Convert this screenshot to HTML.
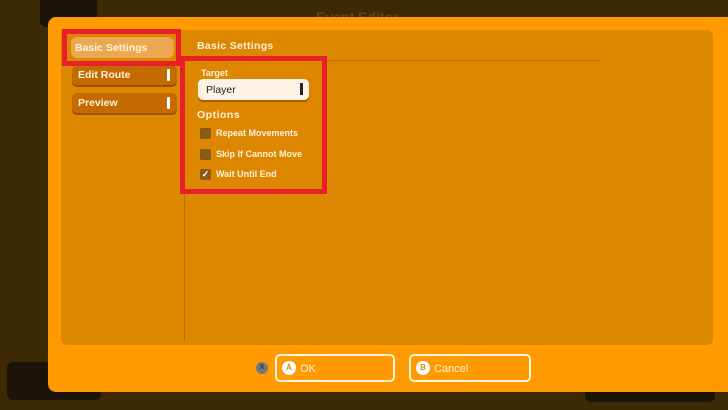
<!DOCTYPE html>
<html><head><style>
*{margin:0;padding:0;box-sizing:border-box}
body{width:728px;height:410px;background:#3d2903;position:relative;overflow:hidden;font-family:"Liberation Sans",sans-serif;font-weight:bold;color:#fff3dc}
.a{position:absolute}
.tab{position:absolute;left:72px;width:105px;height:20px;border-radius:5px;background:#c46a00;box-shadow:0 2px 0 #9a5200;font-size:10.5px;padding:4px 0 0 6px}
.tab i{position:absolute;right:7px;top:4px;width:3px;height:12px;background:#fff;border-radius:1px}
.cb{position:absolute;left:200px;width:11px;height:11px;border-radius:2px;background:#8a5a1a}
.lbl{position:absolute;left:216px;font-size:9px;letter-spacing:0}
.btn{position:absolute;top:354px;height:28px;border:2px solid #fff3dc;border-radius:5px;font-size:11px;padding:7px 0 0 23px;font-weight:normal}
.btn b{position:absolute;left:5px;top:5px;width:14px;height:14px;border-radius:7px;background:#fff;color:#e08a00;font-size:8px;text-align:center;line-height:14px}
</style></head><body>
<div class="a" style="left:40px;top:-6px;width:57px;height:33px;background:#1c1408;border-radius:6px"></div>
<div class="a" style="left:7px;top:362px;width:94px;height:38px;background:#1c1408;border-radius:6px"></div>
<div class="a" style="left:585px;top:380px;width:130px;height:22px;background:#1c1408;border-radius:6px"></div>
<div class="a" style="left:316px;top:9px;font-size:14px;color:#5a4520">Event Editor</div>
<div class="a" style="left:48px;top:17px;width:700px;height:375px;background:#ff9a00;border-radius:8px"></div>
<div class="a" style="left:61px;top:30px;width:652px;height:315px;background:#dd8600;border-radius:6px"></div>
<div class="a" style="left:184px;top:60px;width:1px;height:280px;background:#b86c00"></div>
<div class="a" style="left:190px;top:60px;width:410px;height:1px;background:#b86c00"></div>
<div class="a" style="left:197px;top:40px;font-size:10.5px;letter-spacing:.3px">Basic Settings</div>
<div class="a" style="left:71px;top:37px;width:103px;height:21px;border-radius:6px;background:#eba850;font-size:10.5px;padding:5px 0 0 4px">Basic Settings</div>
<div class="tab" style="top:65px">Edit Route<i></i></div>
<div class="tab" style="top:93px">Preview<i></i></div>
<div class="a" style="left:201px;top:68px;font-size:9px">Target</div>
<div class="a" style="left:198px;top:79px;width:111px;height:21px;border-radius:5px;background:#fdf3e4;box-shadow:0 2px 0 #a85c00;color:#222;font-size:10.5px;padding:5px 0 0 8px;font-weight:normal">Player<span style="position:absolute;right:6px;top:4px;width:3px;height:12px;background:#222"></span></div>
<div class="a" style="left:197px;top:109px;font-size:10.5px;letter-spacing:.5px">Options</div>
<div class="cb" style="top:128px"></div><div class="lbl" style="top:128px">Repeat Movements</div>
<div class="cb" style="top:149px"></div><div class="lbl" style="top:149px">Skip If Cannot Move</div>
<div class="cb" style="top:169px;font-size:9px;text-align:center;line-height:11px;color:#fff">✓</div><div class="lbl" style="top:169px">Wait Until End</div>
<div class="a" style="left:62px;top:29px;width:119px;height:37px;border:5px solid #e8202a"></div>
<div class="a" style="left:180px;top:56px;width:147px;height:138px;border:5px solid #e8202a"></div>
<div class="a" style="left:256px;top:362px;width:12px;height:12px;border-radius:6px;background:#777;color:#333;font-size:7px;text-align:center;line-height:12px">X</div>
<div class="btn" style="left:275px;width:120px"><b>A</b>OK</div>
<div class="btn" style="left:409px;width:122px"><b>B</b>Cancel</div>
</body></html>
